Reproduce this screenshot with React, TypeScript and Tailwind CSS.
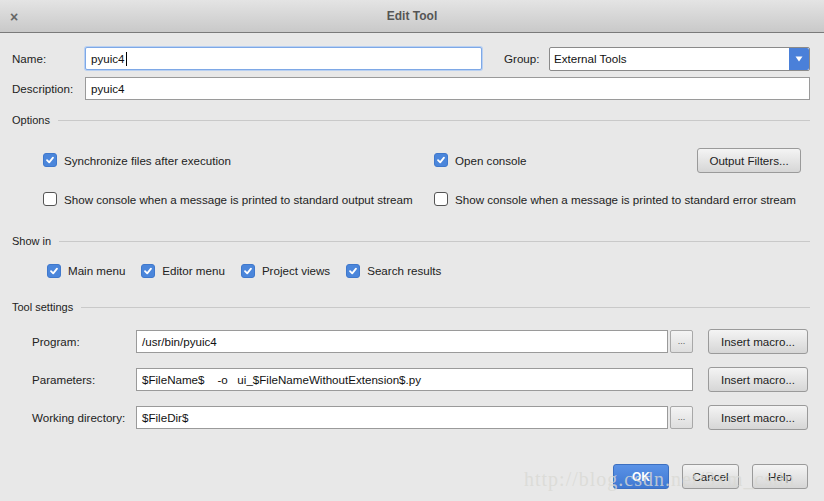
import React from "react";

const font = { fontFamily: '"Liberation Sans", Arial, sans-serif' };

function Check({ checked }: { checked: boolean }) {
  if (checked) {
    return (
      <span className="flex h-[14px] w-[14px] shrink-0 items-center justify-center rounded-[3px] bg-[#4b86db] border border-[#3f78cc]">
        <svg width="10" height="10" viewBox="0 0 10 10">
          <path d="M2 5.2 L4.2 7.4 L8 2.6" stroke="white" strokeWidth="1.8" fill="none" strokeLinecap="round" strokeLinejoin="round" />
        </svg>
      </span>
    );
  }
  return <span className="h-[14px] w-[14px] shrink-0 rounded-[3px] border border-[#555] bg-white" />;
}

function CheckItem({ checked, label }: { checked: boolean; label: string }) {
  return (
    <div className="flex items-center gap-[7px]">
      <Check checked={checked} />
      <span className="text-[11.6px] text-[#222]">{label}</span>
    </div>
  );
}

function Btn({ children, className = "" }: { children: React.ReactNode; className?: string }) {
  return (
    <div
      className={
        "flex h-[25px] items-center justify-center rounded-[3px] border border-[#9a9a9a] bg-gradient-to-b from-[#f4f4f4] to-[#d6d6d6] text-[11.6px] text-[#222] " +
        className
      }
    >
      {children}
    </div>
  );
}

function Heading({ label }: { label: string }) {
  return (
    <div className="flex items-center gap-[8px] h-[14px]">
      <span className="text-[11px] text-[#222]">{label}</span>
      <div className="h-px flex-1 bg-[#c9c9c9]" />
    </div>
  );
}

function Input({ value, className = "" }: { value: string; className?: string }) {
  return (
    <div className={"flex h-[23px] items-center border border-[#9a9a9a] bg-white px-[5px] text-[11.6px] text-[#111] " + className}>
      {value}
    </div>
  );
}

function Dots() {
  return (
    <div className="ml-[2px] flex h-[23px] w-[23px] items-center justify-center rounded-[2px] border border-[#a8a8a8] bg-gradient-to-b from-[#f4f4f4] to-[#dedede] text-[9px] text-[#555]">
      ...
    </div>
  );
}

export default function App() {
  return (
    <div className="relative h-[501px] w-[824px] overflow-hidden bg-[#e8e8e8]" style={font}>
      {/* title bar */}
      <div className="relative flex h-[33px] items-center justify-center border-b border-[#7a7a7a] bg-gradient-to-b from-[#e4e4e4] to-[#c9c9c9]">
        <span className="absolute left-[10px] top-[7px] text-[14px] font-bold text-[#666]">×</span>
        <span className="text-[12px] font-bold text-[#555]">Edit Tool</span>
      </div>

      <div className="flex flex-col pl-[12px] pr-[14px]">
        {/* Name row */}
        <div className="mt-[14px] flex h-[23px] items-center">
          <span className="w-[73px] text-[11.6px] text-[#222]">Name:</span>
          <div className="flex h-[23px] w-[397px] items-center rounded-[2px] border border-[#7ea8e6] bg-white px-[5px] text-[11.6px] text-[#111] shadow-[0_0_0_1px_#b8d0f2]">
            pyuic4<span className="ml-px inline-block h-[14px] w-px bg-black" />
          </div>
          <span className="ml-[22px] w-[45px] text-[11.6px] text-[#222]">Group:</span>
          <div className="flex h-[24px] flex-1 items-center rounded-[2px] border border-[#8a8a8a] bg-white">
            <span className="flex-1 px-[4px] text-[11.6px] text-[#111]">External Tools</span>
            <div className="flex h-full w-[20px] items-center justify-center rounded-r-[2px] bg-[#4a80d9]">
              <svg width="8" height="6" viewBox="0 0 8 6">
                <path d="M0.5 0.5 L7.5 0.5 L4 5.5 Z" fill="white" />
              </svg>
            </div>
          </div>
        </div>

        {/* Description */}
        <div className="mt-[7px] flex items-center">
          <span className="w-[73px] text-[11.6px] text-[#222]">Description:</span>
          <Input value="pyuic4" className="flex-1" />
        </div>

        {/* Options */}
        <div className="mt-[13px]">
          <Heading label="Options" />
        </div>
        <div className="mt-[21px] flex h-[25px] items-center">
          <div className="ml-[31px] w-[391px]">
            <CheckItem checked label="Synchronize files after execution" />
          </div>
          <div className="flex-1">
            <CheckItem checked label="Open console" />
          </div>
          <Btn className="mr-[9px] w-[104px]">Output Filters...</Btn>
        </div>
        <div className="mt-[14px] flex h-[25px] items-center">
          <div className="ml-[31px] w-[391px]">
            <CheckItem checked={false} label="Show console when a message is printed to standard output stream" />
          </div>
          <CheckItem checked={false} label="Show console when a message is printed to standard error stream" />
        </div>

        {/* Show in */}
        <div className="mt-[22px]">
          <Heading label="Show in" />
        </div>
        <div className="ml-[35px] mt-[15px] flex h-[16px] items-center gap-[16px]">
          <CheckItem checked label="Main menu" />
          <CheckItem checked label="Editor menu" />
          <CheckItem checked label="Project views" />
          <CheckItem checked label="Search results" />
        </div>

        {/* Tool settings */}
        <div className="mt-[21px]">
          <Heading label="Tool settings" />
        </div>

        <div className="mt-[15px] flex h-[25px] items-center pl-[20px]">
          <span className="w-[104px] text-[11.6px] text-[#222]">Program:</span>
          <Input value="/usr/bin/pyuic4" className="flex-1" />
          <Dots />
          <Btn className="ml-[15px] mr-[2px] w-[100px]">Insert macro...</Btn>
        </div>
        <div className="mt-[13px] flex h-[25px] items-center pl-[20px]">
          <span className="w-[104px] text-[11.6px] text-[#222]">Parameters:</span>
          <Input value={"$FileName$\u00a0\u00a0\u00a0\u00a0-o\u00a0\u00a0\u00a0ui_$FileNameWithoutExtension$.py"} className="flex-1" />
          <Btn className="ml-[15px] mr-[2px] w-[100px]">Insert macro...</Btn>
        </div>
        <div className="mt-[13px] flex h-[25px] items-center pl-[20px]">
          <span className="w-[104px] text-[11.6px] text-[#222]">Working directory:</span>
          <Input value="$FileDir$" className="flex-1" />
          <Dots />
          <Btn className="ml-[15px] mr-[2px] w-[100px]">Insert macro...</Btn>
        </div>

        {/* footer */}
        <div className="mt-[34px] flex items-center justify-end gap-[13px] pr-[2px]">
          <div className="flex h-[25px] w-[56px] items-center justify-center rounded-[3px] border border-[#3c6fc0] bg-gradient-to-b from-[#5a92e6] to-[#3f78d2] text-[12px] font-bold text-white">
            OK
          </div>
          <Btn className="w-[57px]">Cancel</Btn>
          <Btn className="w-[56px]">Help</Btn>
        </div>
      </div>

      {/* watermark */}
      <div
        className="pointer-events-none absolute left-[524px] top-[464px] text-[20px] tracking-[1px] text-[#d9d9d4]/80"
        style={{ fontFamily: '"Liberation Serif", "Times New Roman", serif' }}
      >
        http://blog.csdn.net/3xm_csdn
      </div>
    </div>
  );
}
